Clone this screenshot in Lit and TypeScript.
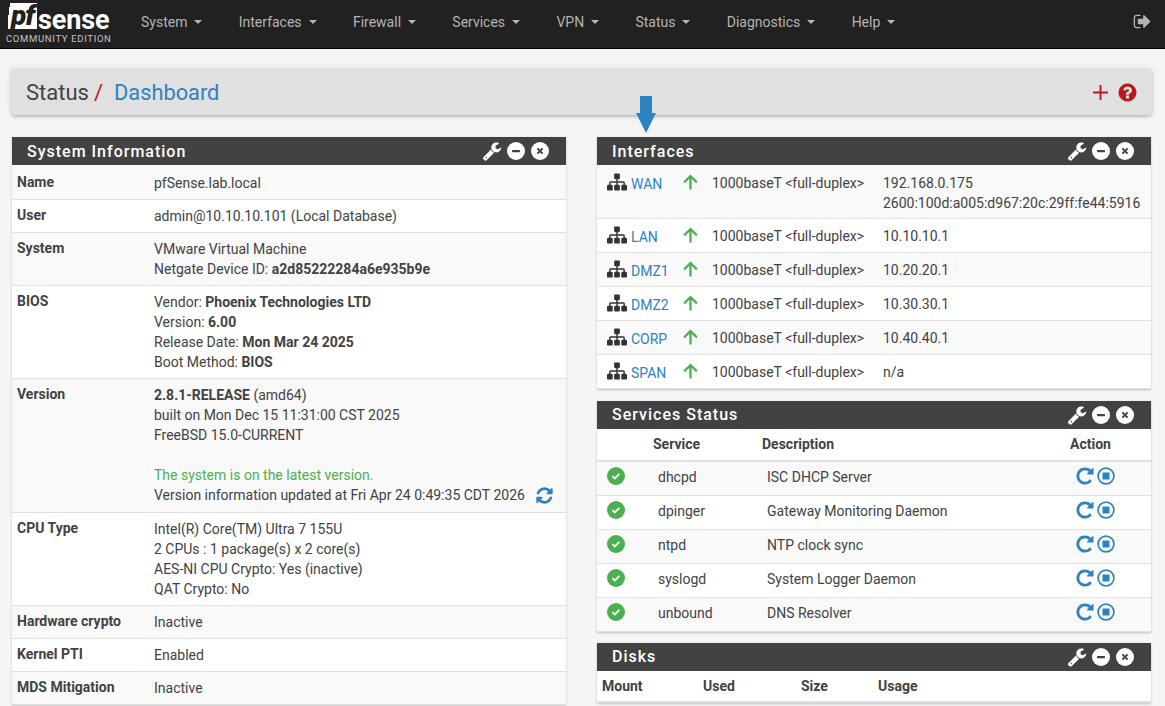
import { LitElement, html, css, svg } from 'lit';
import { customElement } from 'lit/decorators.js';

const FA: Record<string, string> = {
  wrench: 'M448 1472q0-26-19-45t-45-19-45 19-19 45 19 45 45 19 45-19 19-45zm644-420l-682 682q-37 37-90 37-52 0-91-37l-106-108q-38-36-38-90 0-53 38-91l681-681q39 98 114.5 173.5t173.5 114.5zm634-435q0 39-23 106-47 134-164.5 217.5t-258.5 83.5q-185 0-316.5-131.5t-131.5-316.5 131.5-316.5 316.5-131.5q58 0 121.5 16.5t107.5 46.5q16 11 16 28t-16 28l-293 169v224l193 107q5-3 79-48.5t135.5-81 70.5-35.5q15 0 23.5 10t8.5 25z',
  sitemap: 'M1792 1248v320q0 40-28 68t-68 28h-320q-40 0-68-28t-28-68v-320q0-40 28-68t68-28h96v-192h-512v192h96q40 0 68 28t28 68v320q0 40-28 68t-68 28h-320q-40 0-68-28t-28-68v-320q0-40 28-68t68-28h96v-192h-512v192h96q40 0 68 28t28 68v320q0 40-28 68t-68 28h-320q-40 0-68-28t-28-68v-320q0-40 28-68t68-28h96v-192q0-52 38-90t90-38h512v-192h-96q-40 0-68-28t-28-68v-320q0-40 28-68t68-28h320q40 0 68 28t28 68v320q0 40-28 68t-68 28h-96v192h512q52 0 90 38t38 90v192h96q40 0 68 28t28 68z',
  question: 'M1024 1376v-192q0-14-9-23t-23-9h-192q-14 0-23 9t-9 23v192q0 14 9 23t23 9h192q14 0 23-9t9-23zm256-672q0-88-55.5-163t-138.5-116-170-41q-243 0-371 213-15 24 8 42l132 100q7 6 19 6 16 0 25-12 53-68 86-92 34-24 86-24 48 0 85.5 26t37.5 59q0 38-20 61t-68 45q-63 28-115.5 86.5t-52.5 125.5v36q0 14 9 23t23 9h192q14 0 23-9t9-23q0-19 21.5-49.5t54.5-49.5q32-18 49-28.5t46-35 44.5-48 28-60.5 12.5-81zm384 192q0 209-103 385.5t-279.5 279.5-385.5 103-385.5-103-279.5-279.5-103-385.5 103-385.5 279.5-279.5 385.5-103 385.5 103 279.5 279.5 103 385.5z',
  repeat: 'M1664 256v448q0 26-19 45t-45 19h-448q-42 0-59-40-17-39 14-69l138-138q-148-137-349-137-104 0-198.5 40.5t-163.5 109.5-109.5 163.5-40.5 198.5 40.5 198.5 109.5 163.5 163.5 109.5 198.5 40.5q119 0 225-52t179-147q7-10 23-12 15 0 25 9l137 138q9 8 9.5 20.5t-7.5 22.5q-109 132-264 204.5t-327 72.5q-156 0-298-61t-245-164-164-245-61-298 61-298 164-245 245-164 298-61q147 0 284.5 55.5t244.5 156.5l130-129q29-31 70-14 39 17 39 59z',
  refresh: 'M1639 1056q0 5-1 7-64 268-268 434.5t-478 166.5q-146 0-282.5-55t-243.5-157l-129 129q-19 19-45 19t-45-19-19-45v-448q0-26 19-45t45-19h448q26 0 45 19t19 45-19 45l-137 137q71 66 161 102t187 36q134 0 250-65t186-179q11-17 53-117 8-23 30-23h192q13 0 22.5 9.5t9.5 22.5zm25-800v448q0 26-19 45t-45 19h-448q-26 0-45-19t-19-45 19-45l138-138q-148-137-349-137-134 0-250 65t-186 179q-11 17-53 117-8 23-30 23h-199q-13 0-22.5-9.5t-9.5-22.5v-7q65-268 270-434.5t480-166.5q146 0 284 55.5t245 156.5l130-129q19-19 45-19t45 19 19 45z',
  signout: 'M704 1440q0 4 1 20t.5 26.5-3 23.5-10 19.5-20.5 6.5h-320q-119 0-203.5-84.5t-84.5-203.5v-704q0-119 84.5-203.5t203.5-84.5h320q13 0 22.5 9.5t9.5 22.5q0 4 1 20t.5 26.5-3 23.5-10 19.5-20.5 6.5h-320q-66 0-113 47t-47 113v704q0 66 47 113t113 47h312l11.5 1 11.5 3 8 5.5 7 9 2 13.5zm928-544q0 26-19 45l-544 544q-19 19-45 19t-45-19-19-45v-288h-448q-26 0-45-19t-19-45v-384q0-26 19-45t45-19h448v-288q0-26 19-45t45-19 45 19l544 544q19 19 19 45z',
};

const fa = (name: string, cls = '') => html`<svg class="fa ${cls}" viewBox="0 0 1792 1792"><path d="${FA[name]}" fill="currentColor"></path></svg>`;

// round icons drawn by hand, the marks inside are smaller than the stock glyphs
const roundIcon = (cls: string, mark: unknown) => html`<svg class="fa ${cls}" viewBox="0 0 18 18">
  ${svg`<circle cx="9" cy="9" r="9" fill="currentColor"></circle>`}${mark}
</svg>`;

const minusIcon = () => roundIcon('rnd', svg`<rect x="5" y="8" width="8" height="2.2" rx="0.4" fill="#424242"></rect>`);
const timesIcon = () => roundIcon('rnd', svg`<path d="M6.4 6.4l5.2 5.2m0-5.2l-5.2 5.2" stroke="#424242" stroke-width="2" fill="none"></path>`);
const checkIcon = () => roundIcon('chk', svg`<path d="M5.4 9.2l2.4 2.3 4.6-4.7" stroke="#fff" stroke-width="1.8" fill="none"></path>`);

const stopCircle = () => html`<svg class="fa stop" viewBox="0 0 18 18">
  ${svg`<circle cx="9" cy="9" r="7.9" fill="none" stroke="currentColor" stroke-width="1.7"></circle>
  <rect x="5.5" y="5.5" width="7" height="7" rx="0.6" fill="currentColor"></rect>`}
</svg>`;

const arrowUp = () => html`<svg class="up" viewBox="0 0 16 16">
  ${svg`<path d="M8 16V2M1.2 8.4L8 1.6l6.8 6.8" fill="none" stroke="currentColor" stroke-width="2.4"></path>`}
</svg>`;

const menu = ['System', 'Interfaces', 'Firewall', 'Services', 'VPN', 'Status', 'Diagnostics', 'Help'];

const interfaces = [
  { name: 'WAN', ips: ['192.168.0.175', '2600:100d:a005:d967:20c:29ff:fe44:5916'] },
  { name: 'LAN', ips: ['10.10.10.1'] },
  { name: 'DMZ1', ips: ['10.20.20.1'] },
  { name: 'DMZ2', ips: ['10.30.30.1'] },
  { name: 'CORP', ips: ['10.40.40.1'] },
  { name: 'SPAN', ips: ['n/a'] },
];

const services = [
  ['dhcpd', 'ISC DHCP Server'],
  ['dpinger', 'Gateway Monitoring Daemon'],
  ['ntpd', 'NTP clock sync'],
  ['syslogd', 'System Logger Daemon'],
  ['unbound', 'DNS Resolver'],
];

@customElement('app-root')
export class AppRoot extends LitElement {
  static styles = css`
    :host {
      display: block;
      height: 706px;
      overflow: hidden;
      background: #f5f5f5;
      font-family: Roboto, "Liberation Sans", sans-serif;
      font-size: 14px;
      line-height: 20px;
      color: #424242;
    }
    .fa { display: block; flex: none; }
    a { color: #2d82c4; text-decoration: none; }

    .navbar {
      height: 48px;
      background: #212121;
      border-bottom: 1px solid #000;
      display: flex;
      align-items: center;
      padding-left: 6px;
      padding-right: 13px;
    }
    .logo { width: 106px; margin-right: 29px; color: #fff; margin-top: -1px; }
    .logo-top { display: flex; align-items: flex-start; height: 31px; padding-left: 2px; }
    .pf {
      width: 29px;
      height: 26px;
      background: linear-gradient(97deg, transparent 6%, #fff 6%);
      color: #212121;
      font: italic 900 28px/25px Roboto, sans-serif;
      letter-spacing: -1px;
      text-align: center;
      margin-right: 1px;
    }
    .sense { font: 700 27px/24px Roboto, sans-serif; letter-spacing: -0.1px; margin-top: 5px; }
    .edition { font-size: 9.5px; line-height: 10px; letter-spacing: 0.67px; color: #c4c4c4; white-space: nowrap; }
    .menu { display: flex; flex: 1; gap: 36.3px; color: #b4b4b4; margin-top: -4px; }
    .menu span { display: flex; align-items: center; gap: 7px; }
    .caret { width: 0; height: 0; border-top: 4px solid #b4b4b4; border-left: 4px solid transparent; border-right: 4px solid transparent; }
    .logout { width: 19px; height: 19px; color: #b4b4b4; margin-top: -6px; }

    .page { position: relative; padding: 19px 13px 0 12px; }
    .crumb {
      height: 47px;
      box-sizing: border-box;
      margin-left: -1px;
      background: #e0e0e0;
      border-radius: 4px;
      box-shadow: 0 2px 3px rgba(0,0,0,.2), 0 0 8px rgba(0,0,0,.08);
      display: flex;
      align-items: center;
      padding: 2px 14.5px 0 15px;
      font-size: 22px;
    }
    .crumb .slash { color: #b71c1c; margin: 0 11px 0 5px; }
    .crumb a { font-size: 21.8px; }
    .crumb .grow { flex: 1; }
    .crumb .plus { color: #b71c1c; width: 15px; height: 15px; margin-right: 8.5px; }
    .crumb .help { color: #b71c1c; width: 21px; height: 21px; }
    .pointer { position: absolute; left: 636px; top: 47px; width: 20px; height: 38px; color: #2d82c4; }

    .cols { display: grid; grid-template-columns: 554px 554px; gap: 31px; margin-top: 22px; }
    .panel { background: #fff; box-shadow: 0 1px 2px rgba(0,0,0,.22); margin-bottom: 12px; }
    .head {
      height: 28px;
      box-sizing: border-box;
      padding: 2px 17px 0 15px;
      background: #424242;
      color: #fff;
      display: flex;
      align-items: center;
      font-size: 16px;
      font-weight: 500;
      letter-spacing: 1px;
    }
    .services .head, .disks .head { padding-top: 0; }
    .head .title { flex: 1; }
    .head .tools { display: flex; align-items: center; gap: 6px; margin-top: -2px; }
    .services .head .tools, .disks .head .tools { margin-top: 0; }
    .head .tools .fa.rnd { width: 18px; height: 18px; }
    .head .tools .fa.w { width: 20px; height: 20px; margin-right: -0.7px; }

    .info-row { display: grid; grid-template-columns: 137px 1fr; padding: 6px 5px; border-bottom: 1px solid #e0e0e0; }
    .info-row:first-child { padding-top: 8px; }
    .info-row:nth-child(odd) { background: #f9f9f9; }
    .info-row b { font-weight: 700; }
    .label { font-weight: 700; margin-top: -1px; }
    .ok { color: #4caf50; }
    .updated { display: flex; align-items: center; height: 22px; margin-top: -1px; }
    .updated .fa { width: 19px; height: 19px; color: #2d82c4; margin-left: 10px; }

    .if-row { display: grid; grid-template-columns: 76px 29px 171px 1fr; padding: 7px 10px 6px; border-bottom: 1px solid #e0e0e0; }
    .if-row:first-child { padding-top: 8px; padding-bottom: 5px; }
    .if-row:nth-child(odd) { background: #f9f9f9; }
    .if-name { display: flex; align-items: center; gap: 4px; height: 20px; }
    .if-name .fa { width: 20px; height: 20px; color: #333; margin-top: -2px; }
    .if-name a { margin-top: 2px; }
    .up { width: 15px; height: 16px; color: #4caf50; display: block; margin-top: 1px; }
    .if-speed { white-space: nowrap; }

    .services { margin-bottom: 11px; }
    .th-row, .svc-row { display: grid; grid-template-columns: 56px 109px 308px 81px; }
    .th-row { height: 33px; align-items: center; padding-bottom: 1px; box-sizing: border-box; font-weight: 700; border-bottom: 2px solid #e0e0e0; }
    .svc-row { height: 34px; box-sizing: border-box; align-items: center; padding-bottom: 3px; border-bottom: 1px solid #e0e0e0; }
    .svc-row:nth-child(odd) { background: #f9f9f9; }
    .svc-check { width: 18px; height: 18px; margin-left: 10px; margin-top: -2px; color: #4caf50; }
    .svc-check .fa { width: 18px; height: 18px; }
    .svc-name { padding-left: 5px; }
    .svc-desc { padding-left: 5px; }
    .actions { display: flex; align-items: center; gap: 2px; color: #2d82c4; margin-left: 5px; margin-top: -2px; }
    .actions .fa { width: 20px; height: 20px; }
    .actions .fa.stop { width: 18px; height: 18px; }

    .disk-row { display: grid; grid-template-columns: 101px 98px 77px 1fr; height: 32px; align-items: center; padding-left: 5px; font-weight: 700; border-bottom: 2px solid #e0e0e0; box-sizing: border-box; }
  `;

  private head(title: string) {
    return html`<div class="head">
      <span class="title">${title}</span>
      <span class="tools">${fa('wrench', 'w')}${minusIcon()}${timesIcon()}</span>
    </div>`;
  }

  private infoRow(label: string, body: unknown) {
    return html`<div class="info-row"><div class="label">${label}</div><div>${body}</div></div>`;
  }

  render() {
    return html`
      <nav class="navbar">
        <div class="logo">
          <div class="logo-top"><span class="pf">pf</span><span class="sense">sense</span></div>
          <div class="edition">COMMUNITY EDITION</div>
        </div>
        <div class="menu">
          ${menu.map((m) => html`<span>${m}<i class="caret"></i></span>`)}
        </div>
        <div class="logout">${fa('signout')}</div>
      </nav>
      <div class="page">
        <div class="crumb">
          <span>Status</span><span class="slash">/</span><a href="#">Dashboard</a>
          <span class="grow"></span>
          <svg class="plus" viewBox="0 0 16 16"><path d="M8 0v16M0 8h16" stroke="currentColor" stroke-width="2" fill="none"></path></svg>
          <span class="help">${fa('question')}</span>
        </div>
        <svg class="pointer" viewBox="0 0 20 38"><path d="M4 0h12v17h4L10 37 0 17h4z" fill="currentColor"></path></svg>
        <div class="cols">
          <div>
            <section class="panel">
              ${this.head('System Information')}
              <div>
                ${this.infoRow('Name', 'pfSense.lab.local')}
                ${this.infoRow('User', 'admin@10.10.10.101 (Local Database)')}
                ${this.infoRow('System', html`VMware Virtual Machine<br>Netgate Device ID: <b>a2d85222284a6e935b9e</b>`)}
                ${this.infoRow('BIOS', html`Vendor: <b>Phoenix Technologies LTD</b><br>Version: <b>6.00</b><br>Release Date: <b>Mon Mar 24 2025</b><br>Boot Method: <b>BIOS</b>`)}
                ${this.infoRow('Version', html`<b>2.8.1-RELEASE</b> (amd64)<br>built on Mon Dec 15 11:31:00 CST 2025<br>FreeBSD 15.0-CURRENT<br><br><span class="ok">The system is on the latest version.</span><div class="updated">Version information updated at Fri Apr 24 0:49:35 CDT 2026${fa('refresh')}</div>`)}
                ${this.infoRow('CPU Type', html`Intel(R) Core(TM) Ultra 7 155U<br>2 CPUs : 1 package(s) x 2 core(s)<br>AES-NI CPU Crypto: Yes (inactive)<br>QAT Crypto: No`)}
                ${this.infoRow('Hardware crypto', 'Inactive')}
                ${this.infoRow('Kernel PTI', 'Enabled')}
                ${this.infoRow('MDS Mitigation', 'Inactive')}
              </div>
            </section>
          </div>
          <div>
            <section class="panel">
              ${this.head('Interfaces')}
              <div>
                ${interfaces.map((i) => html`<div class="if-row">
                  <div class="if-name">${fa('sitemap')}<a href="#">${i.name}</a></div>
                  <div>${arrowUp()}</div>
                  <div class="if-speed">1000baseT &lt;full-duplex&gt;</div>
                  <div>${i.ips.map((ip) => html`<div>${ip}</div>`)}</div>
                </div>`)}
              </div>
            </section>
            <section class="panel services">
              ${this.head('Services Status')}
              <div class="th-row"><span></span><span>Service</span><span>Description</span><span>Action</span></div>
              <div>
                ${services.map(([n, d]) => html`<div class="svc-row">
                  <div class="svc-check">${checkIcon()}</div>
                  <div class="svc-name">${n}</div>
                  <div class="svc-desc">${d}</div>
                  <div class="actions">${fa('repeat')}${stopCircle()}</div>
                </div>`)}
              </div>
            </section>
            <section class="panel disks">
              ${this.head('Disks')}
              <div class="disk-row"><span>Mount</span><span>Used</span><span>Size</span><span>Usage</span></div>
            </section>
          </div>
        </div>
      </div>
    `;
  }
}
